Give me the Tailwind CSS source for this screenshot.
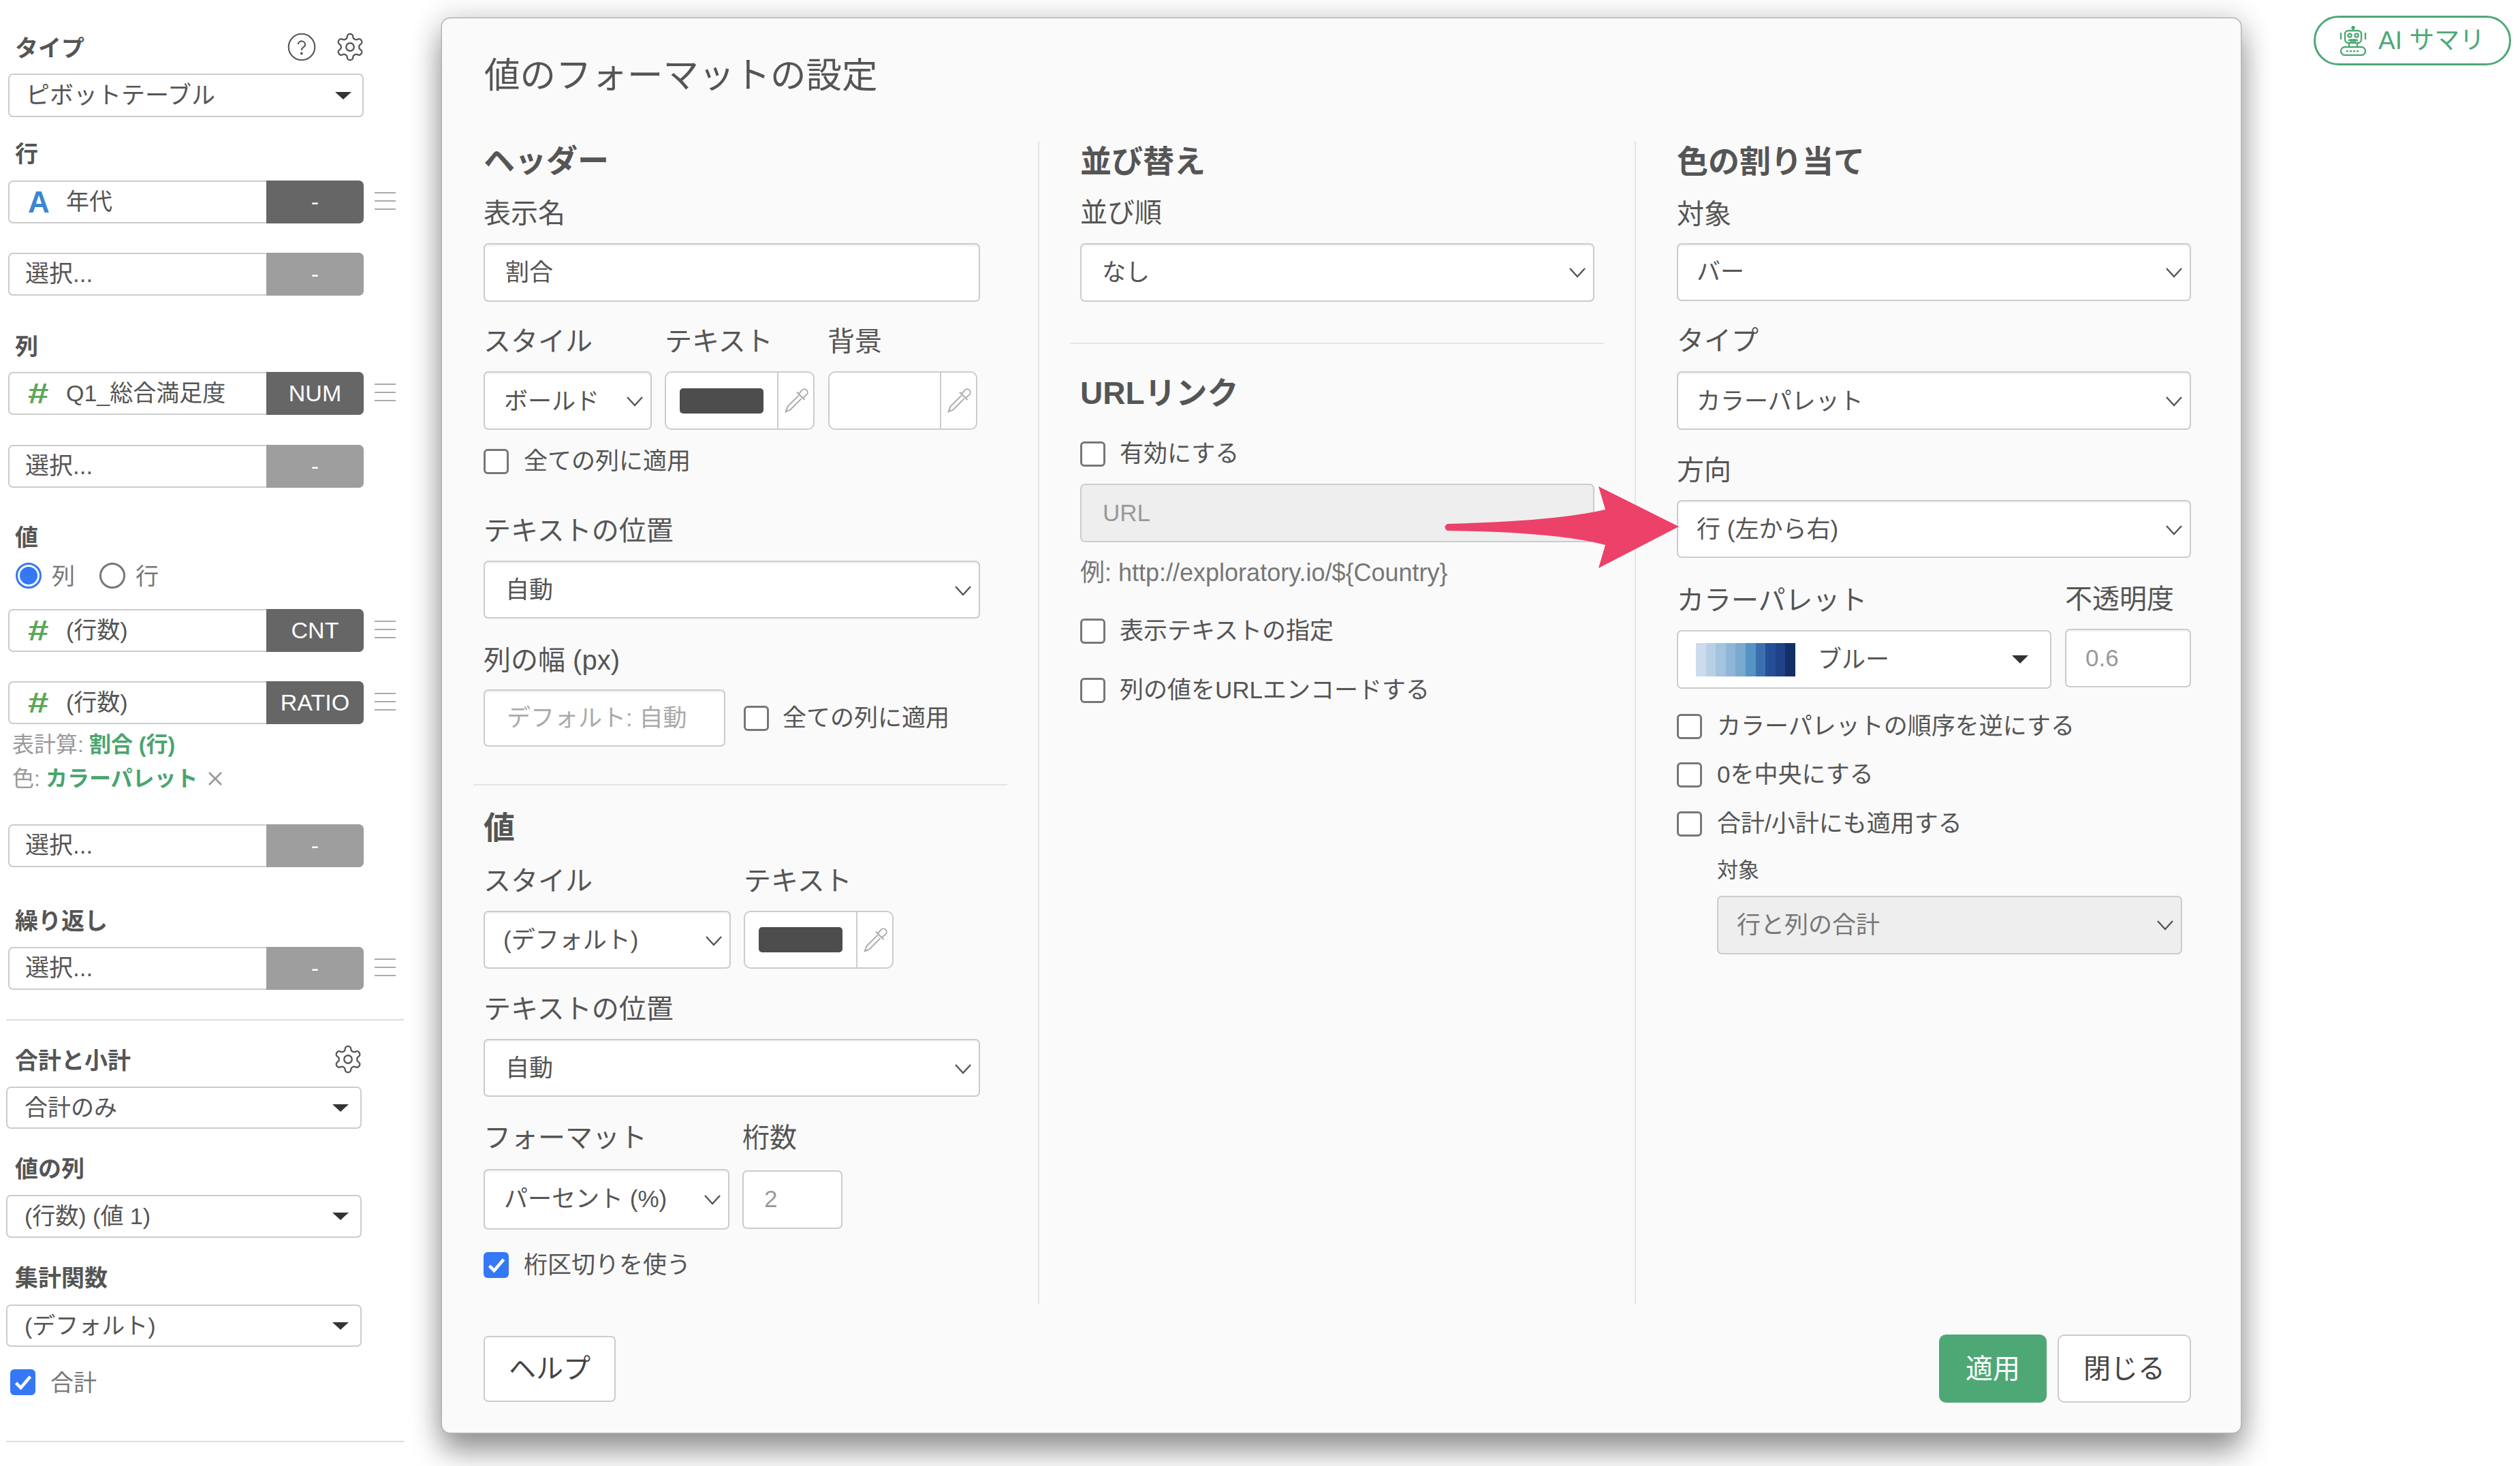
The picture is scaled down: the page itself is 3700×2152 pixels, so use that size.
<!DOCTYPE html>
<html lang="ja">
<head>
    <meta charset="UTF-8">
    <meta name="viewport" content="width=device-width, initial-scale=1.0">
    <title>値のフォーマットの設定</title>
    <script src="https://cdn.jsdelivr.net/npm/@tailwindcss/browser@4"></script>
</head>
<body class="bg-white text-[#555] font-['Liberation_Sans','Noto_Sans_CJK_JP',sans-serif]">
<div class="relative w-[3700px] h-[2152px] overflow-hidden">

    <!-- Sidebar -->
    <aside class="w-[600px] pl-[12px] pt-[49px]">
        <div class="flex items-center justify-between w-[525px] h-[40px] pl-[10px]">
            <span class="pt-[4px] text-[34px] font-bold">タイプ</span>
            <div class="flex items-center gap-[27px]">
                <svg class="w-[42px] h-[42px]" viewBox="0 0 24 24" fill="none" stroke="#555" stroke-width="1.2"><circle cx="12" cy="12" r="11"/><path d="M9 9.3a3 3 0 0 1 5.9.8c0 2-3 2.3-3 4.2" stroke-linecap="round"/><circle cx="11.9" cy="17.4" r=".5" fill="#555"/></svg>
                <svg class="w-[46px] h-[46px]" viewBox="0 0 24 24" fill="none" stroke="#555" stroke-width="1.2"><path d="M12.22 2h-.44a2 2 0 0 0-2 2v.18a2 2 0 0 1-1 1.73l-.43.25a2 2 0 0 1-2 0l-.15-.08a2 2 0 0 0-2.73.73l-.22.38a2 2 0 0 0 .73 2.73l.15.1a2 2 0 0 1 1 1.72v.51a2 2 0 0 1-1 1.74l-.15.09a2 2 0 0 0-.73 2.73l.22.38a2 2 0 0 0 2.73.73l.15-.08a2 2 0 0 1 2 0l.43.25a2 2 0 0 1 1 1.73V20a2 2 0 0 0 2 2h.44a2 2 0 0 0 2-2v-.18a2 2 0 0 1 1-1.73l.43-.25a2 2 0 0 1 2 0l.15.08a2 2 0 0 0 2.73-.73l.22-.39a2 2 0 0 0-.73-2.73l-.15-.08a2 2 0 0 1-1-1.74v-.5a2 2 0 0 1 1-1.74l.15-.09a2 2 0 0 0 .73-2.73l-.22-.38a2 2 0 0 0-2.73-.73l-.15.08a2 2 0 0 1-2 0l-.43-.25a2 2 0 0 1-1-1.73V4a2 2 0 0 0-2-2z"/><circle cx="12" cy="12" r="3"/></svg>
            </div>
        </div>
        <div class="mt-[19px] flex items-center justify-between w-[522px] h-[64px] pl-[24px] pr-[16px] bg-white border-2 border-[#ccc] rounded-[7px] text-[35px]">
            <span>ピボットテーブル</span><span class="w-0 h-0 border-x-[12px] border-x-transparent border-t-[11px] border-t-[#333]"></span>
        </div>

        <div class="mt-[32px] h-[40px] pl-[10px] pt-[4px] flex items-center text-[34px] font-bold">行</div>
        <div class="mt-[21px] flex items-center h-[63px]">
            <div class="flex items-center w-[379px] h-full pl-[27px] bg-white border-2 border-r-0 border-[#ccc] rounded-l-[7px] text-[34px]">
                <span class="w-[56px] text-[44px] font-bold text-[#3b86d1]">A</span><span>年代</span>
            </div>
            <div class="flex items-center justify-center w-[143px] h-full bg-[#666] rounded-r-[7px] text-white text-[34px]">-</div>
            <div class="ml-[16px] -mt-[4px] w-[31px] flex flex-col gap-[10px]"><div class="h-[2px] bg-[#aaa]"></div><div class="h-[2px] bg-[#aaa]"></div><div class="h-[2px] bg-[#aaa]"></div></div>
        </div>
        <div class="mt-[43px] flex items-center h-[63px]">
            <div class="flex items-center w-[379px] h-full pl-[23px] bg-white border-2 border-r-0 border-[#ccc] rounded-l-[7px] text-[35px]">選択...</div>
            <div class="flex items-center justify-center w-[143px] h-full bg-[#9e9e9e] rounded-r-[7px] text-white text-[34px]">-</div>
        </div>

        <div class="mt-[53px] h-[40px] pl-[10px] pt-[4px] flex items-center text-[34px] font-bold">列</div>
        <div class="mt-[19px] flex items-center h-[63px]">
            <div class="flex items-center w-[379px] h-full pl-[27px] bg-white border-2 border-r-0 border-[#ccc] rounded-l-[7px] text-[34px]">
                <span class="w-[56px] text-[42px] font-bold text-[#5aa758]"><span class="inline-block origin-left scale-x-[1.3]">#</span></span><span>Q1_総合満足度</span>
            </div>
            <div class="flex items-center justify-center w-[143px] h-full bg-[#666] rounded-r-[7px] text-white text-[34px]">NUM</div>
            <div class="ml-[16px] -mt-[4px] w-[31px] flex flex-col gap-[10px]"><div class="h-[2px] bg-[#aaa]"></div><div class="h-[2px] bg-[#aaa]"></div><div class="h-[2px] bg-[#aaa]"></div></div>
        </div>
        <div class="mt-[44px] flex items-center h-[63px]">
            <div class="flex items-center w-[379px] h-full pl-[23px] bg-white border-2 border-r-0 border-[#ccc] rounded-l-[7px] text-[35px]">選択...</div>
            <div class="flex items-center justify-center w-[143px] h-full bg-[#9e9e9e] rounded-r-[7px] text-white text-[34px]">-</div>
        </div>

        <div class="mt-[51px] h-[40px] pl-[10px] pt-[4px] flex items-center text-[34px] font-bold">値</div>
        <div class="mt-[18px] flex items-center h-[38px] pl-[11px] pt-[1px] text-[34px] text-[#777]">
            <span class="flex items-center justify-center w-[38px] h-[38px] rounded-full border-[3px] border-[#3478f6] bg-white"><span class="w-[26px] h-[26px] rounded-full bg-[#3478f6]"></span></span>
            <span class="ml-[15px] pt-[3px]">列</span>
            <span class="ml-[36px] w-[38px] h-[38px] rounded-full border-[3px] border-[#777] bg-white"></span>
            <span class="ml-[15px] pt-[3px]">行</span>
        </div>
        <div class="mt-[31px] flex items-center h-[63px]">
            <div class="flex items-center w-[379px] h-full pl-[27px] bg-white border-2 border-r-0 border-[#ccc] rounded-l-[7px] text-[34px]">
                <span class="w-[56px] text-[42px] font-bold text-[#5aa758]"><span class="inline-block origin-left scale-x-[1.3]">#</span></span><span>(行数)</span>
            </div>
            <div class="flex items-center justify-center w-[143px] h-full bg-[#666] rounded-r-[7px] text-white text-[34px]">CNT</div>
            <div class="ml-[16px] -mt-[4px] w-[31px] flex flex-col gap-[10px]"><div class="h-[2px] bg-[#aaa]"></div><div class="h-[2px] bg-[#aaa]"></div><div class="h-[2px] bg-[#aaa]"></div></div>
        </div>
        <div class="mt-[43px] flex items-center h-[63px]">
            <div class="flex items-center w-[379px] h-full pl-[27px] bg-white border-2 border-r-0 border-[#ccc] rounded-l-[7px] text-[34px]">
                <span class="w-[56px] text-[42px] font-bold text-[#5aa758]"><span class="inline-block origin-left scale-x-[1.3]">#</span></span><span>(行数)</span>
            </div>
            <div class="flex items-center justify-center w-[143px] h-full bg-[#666] rounded-r-[7px] text-white text-[34px]">RATIO</div>
            <div class="ml-[16px] -mt-[4px] w-[31px] flex flex-col gap-[10px]"><div class="h-[2px] bg-[#aaa]"></div><div class="h-[2px] bg-[#aaa]"></div><div class="h-[2px] bg-[#aaa]"></div></div>
        </div>
        <div class="mt-[10px] h-[40px] pl-[6px] flex items-center text-[32px] text-[#999]">表計算:<span class="ml-[8px] font-bold text-[#4aa56f]">割合 (行)</span></div>
        <div class="mt-[10px] h-[40px] pl-[6px] flex items-center text-[32px] text-[#999]">色:<span class="ml-[8px] font-bold text-[#4aa56f]">カラーパレット</span>
            <svg class="ml-[14px] w-[22px] h-[22px]" viewBox="0 0 22 22" fill="none" stroke="#999" stroke-width="2.6"><path d="M2 2l18 18M20 2L2 20"/></svg>
        </div>
        <div class="mt-[47px] flex items-center h-[63px]">
            <div class="flex items-center w-[379px] h-full pl-[23px] bg-white border-2 border-r-0 border-[#ccc] rounded-l-[7px] text-[35px]">選択...</div>
            <div class="flex items-center justify-center w-[143px] h-full bg-[#9e9e9e] rounded-r-[7px] text-white text-[34px]">-</div>
        </div>

        <div class="mt-[57px] h-[40px] pl-[10px] pt-[4px] flex items-center text-[34px] font-bold">繰り返し</div>
        <div class="mt-[20px] flex items-center h-[63px]">
            <div class="flex items-center w-[379px] h-full pl-[23px] bg-white border-2 border-r-0 border-[#ccc] rounded-l-[7px] text-[35px]">選択...</div>
            <div class="flex items-center justify-center w-[143px] h-full bg-[#9e9e9e] rounded-r-[7px] text-white text-[34px]">-</div>
            <div class="ml-[16px] -mt-[4px] w-[31px] flex flex-col gap-[10px]"><div class="h-[2px] bg-[#aaa]"></div><div class="h-[2px] bg-[#aaa]"></div><div class="h-[2px] bg-[#aaa]"></div></div>
        </div>

        <div class="mt-[43px] -ml-[3px] w-[584px] h-[2px] bg-[#ddd]"></div>

        <div class="mt-[37px] flex items-center justify-between w-[522px] h-[40px] pl-[10px]">
            <span class="pt-[4px] text-[34px] font-bold">合計と小計</span>
            <svg class="w-[46px] h-[46px]" viewBox="0 0 24 24" fill="none" stroke="#555" stroke-width="1.2"><path d="M12.22 2h-.44a2 2 0 0 0-2 2v.18a2 2 0 0 1-1 1.73l-.43.25a2 2 0 0 1-2 0l-.15-.08a2 2 0 0 0-2.73.73l-.22.38a2 2 0 0 0 .73 2.73l.15.1a2 2 0 0 1 1 1.72v.51a2 2 0 0 1-1 1.74l-.15.09a2 2 0 0 0-.73 2.73l.22.38a2 2 0 0 0 2.73.73l.15-.08a2 2 0 0 1 2 0l.43.25a2 2 0 0 1 1 1.73V20a2 2 0 0 0 2 2h.44a2 2 0 0 0 2-2v-.18a2 2 0 0 1 1-1.73l.43-.25a2 2 0 0 1 2 0l.15.08a2 2 0 0 0 2.73-.73l.22-.39a2 2 0 0 0-.73-2.73l-.15-.08a2 2 0 0 1-1-1.74v-.5a2 2 0 0 1 1-1.74l.15-.09a2 2 0 0 0 .73-2.73l-.22-.38a2 2 0 0 0-2.73-.73l-.15.08a2 2 0 0 1-2 0l-.43-.25a2 2 0 0 1-1-1.73V4a2 2 0 0 0-2-2z"/><circle cx="12" cy="12" r="3"/></svg>
        </div>
        <div class="mt-[20px] -ml-[3px] flex items-center justify-between w-[522px] h-[62px] pl-[25px] pr-[17px] bg-white border-2 border-[#ccc] rounded-[7px] text-[34px]">
            <span>合計のみ</span><span class="w-0 h-0 border-x-[12px] border-x-transparent border-t-[11px] border-t-[#333]"></span>
        </div>
        <div class="mt-[37px] h-[40px] pl-[10px] pt-[4px] flex items-center text-[34px] font-bold">値の列</div>
        <div class="mt-[20px] -ml-[3px] flex items-center justify-between w-[522px] h-[63px] pl-[25px] pr-[17px] bg-white border-2 border-[#ccc] rounded-[7px] text-[34px]">
            <span>(行数) (値 1)</span><span class="w-0 h-0 border-x-[12px] border-x-transparent border-t-[11px] border-t-[#333]"></span>
        </div>
        <div class="mt-[37px] h-[40px] pl-[10px] pt-[4px] flex items-center text-[34px] font-bold">集計関数</div>
        <div class="mt-[21px] -ml-[3px] flex items-center justify-between w-[522px] h-[62px] pl-[25px] pr-[17px] bg-white border-2 border-[#ccc] rounded-[7px] text-[34px]">
            <span>(デフォルト)</span><span class="w-0 h-0 border-x-[12px] border-x-transparent border-t-[11px] border-t-[#333]"></span>
        </div>
        <div class="mt-[33px] flex items-center h-[38px] pl-[3px] text-[34px] text-[#777]">
            <span class="flex items-center justify-center w-[37px] h-[38px] rounded-[6px] bg-[#3478f6]"><svg class="w-[28px] h-[28px]" viewBox="0 0 24 24" fill="none" stroke="#fff" stroke-width="4"><path d="M3 13l6 6L21 5"/></svg></span>
            <span class="ml-[22px] pt-[3px]">合計</span>
        </div>
        <div class="mt-[67px] -ml-[3px] w-[584px] h-[2px] bg-[#ddd]"></div>
    </aside>

    <!-- AI summary pill -->
    <div class="absolute left-[3397px] top-[23px] flex items-center w-[290px] h-[73px] pl-[35px] border-[3px] border-[#4ea875] rounded-full text-[#4ea875] text-[37px]">
        <svg class="w-[40px] h-[44px]" viewBox="0 0 40 44" fill="none" stroke="#4ea875" stroke-width="2.4">
            <path d="M20 1v6"/><circle cx="20" cy="2.5" r="1.5" fill="#4ea875"/>
            <rect x="8" y="7" width="24" height="18" rx="5"/>
            <circle cx="15" cy="14" r="2.6"/><circle cx="25" cy="14" r="2.6"/>
            <path d="M13 21h14M17 19v5M20 19v5M23 19v5M14 25v6M26 25v6M2 10v10M38 10v10"/>
            <rect x="2" y="31" width="36" height="12" rx="6"/>
            <path d="M10 37h20" stroke-dasharray="3 2"/>
        </svg>
        <span class="ml-[17px]">AI サマリ</span>
    </div>

    <!-- Modal -->
    <div class="absolute left-[649px] top-[27px] w-[2641px] h-[2076px] pt-[52px] bg-[#fafafa] rounded-[12px] shadow-[0_0_0_1.5px_#b5b5b5,0_28px_44px_0_rgba(0,0,0,0.38),0_0_40px_6px_rgba(0,0,0,0.14)]">
        <h2 class="h-[60px] pl-[62px] pt-[4px] flex items-center text-[52.5px] font-normal text-[#555]">値のフォーマットの設定</h2>

        <div class="mt-[68px] flex h-[1708px]">
            <!-- Column 1 -->
            <div class="w-[877px] pl-[61px] border-r-2 border-[#e5e5e5]">
                <div class="w-[729px]">
                    <h3 class="h-[54px] pt-[4px] flex items-center text-[46px] font-bold">ヘッダー</h3>
                    <label class="mt-[27px] h-[48px] pt-[2px] flex items-center text-[40px]">表示名</label>
                    <div class="mt-[21px] flex items-center h-[86px] pl-[30px] bg-white border-2 border-[#ccc] rounded-[7px] shadow-[inset_0_2px_2px_rgba(0,0,0,0.06)] text-[35px]">割合</div>

                    <div class="mt-[34px] flex h-[48px] items-center text-[40px]">
                        <span class="w-[266px]">スタイル</span><span class="w-[239px]">テキスト</span><span>背景</span>
                    </div>
                    <div class="mt-[20px] flex h-[86px]">
                        <div class="flex items-center justify-between w-[247px] pl-[28px] pr-[10px] pt-[2px] bg-white border-2 border-[#ccc] rounded-[7px] shadow-[inset_0_2px_2px_rgba(0,0,0,0.06)] text-[35px]">
                            <span>ボールド</span>
                            <svg class="w-[26px] h-[16px]" viewBox="0 0 26 16" fill="none" stroke="#555" stroke-width="2.4"><path d="M2 2l11 12L24 2"/></svg>
                        </div>
                        <div class="ml-[19px] flex w-[220px] bg-white border-2 border-[#ccc] rounded-[10px]">
                            <div class="flex-1 flex items-center justify-center border-r-2 border-[#ccc]"><div class="w-[123px] h-[37px] rounded-[5px] bg-[#4d4d4d]"></div></div>
                            <div class="w-[51px] flex items-center justify-center"><svg class="w-[46px] h-[46px] shrink-0" viewBox="0 0 24 24" fill="none" stroke="#aaa" stroke-width="1"><path d="M14 7l2.5-3a2.1 2.1 0 0 1 3.5 3.5L17 10"/><path d="M12.5 5.5l6 6"/><path d="M14 8L5.5 16.5 4 20.5 7.5 19 16 10.5"/></svg></div>
                        </div>
                        <div class="ml-[20px] flex w-[219px] bg-white border-2 border-[#ccc] rounded-[10px]">
                            <div class="flex-1 border-r-2 border-[#ccc]"></div>
                            <div class="w-[51px] flex items-center justify-center"><svg class="w-[46px] h-[46px] shrink-0" viewBox="0 0 24 24" fill="none" stroke="#aaa" stroke-width="1"><path d="M14 7l2.5-3a2.1 2.1 0 0 1 3.5 3.5L17 10"/><path d="M12.5 5.5l6 6"/><path d="M14 8L5.5 16.5 4 20.5 7.5 19 16 10.5"/></svg></div>
                        </div>
                    </div>
                    <div class="mt-[27px] flex items-center h-[38px] text-[35px]">
                        <span class="w-[37px] h-[37px] rounded-[6px] border-[3px] border-[#777] bg-white"></span><span class="ml-[22px]">全ての列に適用</span>
                    </div>

                    <label class="mt-[58px] h-[48px] pt-[2px] flex items-center text-[40px]">テキストの位置</label>
                    <div class="mt-[21px] flex items-center justify-between h-[85px] pl-[30px] pr-[10px] pt-[2px] bg-white border-2 border-[#ccc] rounded-[7px] shadow-[inset_0_2px_2px_rgba(0,0,0,0.06)] text-[35px]">
                        <span>自動</span>
                        <svg class="w-[26px] h-[16px]" viewBox="0 0 26 16" fill="none" stroke="#555" stroke-width="2.4"><path d="M2 2l11 12L24 2"/></svg>
                    </div>

                    <label class="mt-[37px] h-[48px] flex items-center text-[40px]">列の幅 (px)</label>
                    <div class="mt-[19px] flex items-center h-[84px]">
                        <div class="flex items-center w-[355px] h-full pl-[32px] bg-white border-2 border-[#ccc] rounded-[7px] shadow-[inset_0_2px_2px_rgba(0,0,0,0.06)] text-[35px] text-[#aaa]">デフォルト: 自動</div>
                        <span class="ml-[27px] w-[37px] h-[37px] rounded-[6px] border-[3px] border-[#777] bg-white"></span>
                        <span class="ml-[20px] text-[35px]">全ての列に適用</span>
                    </div>

                    <div class="mt-[55px] -ml-[15px] w-[784px] h-[2px] bg-[#e5e5e5]"></div>

                    <h3 class="mt-[34px] h-[54px] pt-[2px] flex items-center text-[46px] font-bold">値</h3>
                    <div class="mt-[27px] flex h-[48px] pt-[2px] items-center text-[40px]">
                        <span class="w-[382px]">スタイル</span><span>テキスト</span>
                    </div>
                    <div class="mt-[21px] flex h-[85px]">
                        <div class="flex items-center justify-between w-[363px] pl-[27px] pr-[10px] pt-[2px] bg-white border-2 border-[#ccc] rounded-[7px] shadow-[inset_0_2px_2px_rgba(0,0,0,0.06)] text-[35px]">
                            <span>(デフォルト)</span>
                            <svg class="w-[26px] h-[16px]" viewBox="0 0 26 16" fill="none" stroke="#555" stroke-width="2.4"><path d="M2 2l11 12L24 2"/></svg>
                        </div>
                        <div class="ml-[19px] flex w-[220px] bg-white border-2 border-[#ccc] rounded-[10px]">
                            <div class="flex-1 flex items-center justify-center border-r-2 border-[#ccc]"><div class="w-[123px] h-[37px] rounded-[5px] bg-[#4d4d4d]"></div></div>
                            <div class="w-[51px] flex items-center justify-center"><svg class="w-[46px] h-[46px] shrink-0" viewBox="0 0 24 24" fill="none" stroke="#aaa" stroke-width="1"><path d="M14 7l2.5-3a2.1 2.1 0 0 1 3.5 3.5L17 10"/><path d="M12.5 5.5l6 6"/><path d="M14 8L5.5 16.5 4 20.5 7.5 19 16 10.5"/></svg></div>
                        </div>
                    </div>

                    <label class="mt-[34px] h-[48px] pt-[2px] flex items-center text-[40px]">テキストの位置</label>
                    <div class="mt-[21px] flex items-center justify-between h-[85px] pl-[30px] pr-[10px] pt-[2px] bg-white border-2 border-[#ccc] rounded-[7px] shadow-[inset_0_2px_2px_rgba(0,0,0,0.06)] text-[35px]">
                        <span>自動</span>
                        <svg class="w-[26px] h-[16px]" viewBox="0 0 26 16" fill="none" stroke="#555" stroke-width="2.4"><path d="M2 2l11 12L24 2"/></svg>
                    </div>

                    <div class="mt-[35px] flex h-[48px] pt-[1px] items-center text-[40px]">
                        <span class="w-[380px]">フォーマット</span><span>桁数</span>
                    </div>
                    <div class="mt-[23px] flex items-center h-[89px]">
                        <div class="flex items-center justify-between w-[361px] h-full pl-[28px] pr-[10px] bg-white border-2 border-[#ccc] rounded-[7px] shadow-[inset_0_2px_2px_rgba(0,0,0,0.06)] text-[35px]">
                            <span>パーセント (%)</span>
                            <svg class="w-[26px] h-[16px]" viewBox="0 0 26 16" fill="none" stroke="#555" stroke-width="2.4"><path d="M2 2l11 12L24 2"/></svg>
                        </div>
                        <div class="ml-[19px] flex items-center w-[147px] h-[86px] pl-[30px] bg-white border-2 border-[#ccc] rounded-[7px] text-[35px] text-[#999]">2</div>
                    </div>
                    <div class="mt-[33px] flex items-center h-[38px] text-[35px]">
                        <span class="flex items-center justify-center w-[37px] h-[38px] rounded-[6px] bg-[#3478f6]"><svg class="w-[28px] h-[28px]" viewBox="0 0 24 24" fill="none" stroke="#fff" stroke-width="4"><path d="M3 13l6 6L21 5"/></svg></span>
                        <span class="ml-[22px]">桁区切りを使う</span>
                    </div>
                </div>
            </div>

            <!-- Column 2 -->
            <div class="w-[876px] pl-[60px] border-r-2 border-[#e5e5e5]">
                <div class="w-[755px]">
                    <h3 class="mt-[2px] h-[54px] pt-[3px] flex items-center text-[46px] font-bold">並び替え</h3>
                    <label class="mt-[25px] h-[48px] flex items-center text-[40px]">並び順</label>
                    <div class="mt-[21px] flex items-center justify-between h-[86px] pl-[30px] pr-[10px] bg-white border-2 border-[#ccc] rounded-[7px] shadow-[inset_0_2px_2px_rgba(0,0,0,0.06)] text-[35px]">
                        <span>なし</span>
                        <svg class="w-[26px] h-[16px]" viewBox="0 0 26 16" fill="none" stroke="#555" stroke-width="2.4"><path d="M2 2l11 12L24 2"/></svg>
                    </div>
                    <div class="mt-[60px] -ml-[15px] w-[784px] h-[2px] bg-[#e5e5e5]"></div>
                    <h3 class="mt-[44px] h-[54px] pt-[2px] flex items-center text-[46px] font-bold">URLリンク</h3>
                    <div class="mt-[45px] flex items-center h-[37px] text-[35px]">
                        <span class="w-[37px] h-[37px] rounded-[6px] border-[3px] border-[#777] bg-white"></span><span class="ml-[21px]">有効にする</span>
                    </div>
                    <div class="mt-[25px] flex items-center h-[86px] pl-[31px] bg-[#eee] border-2 border-[#ccc] rounded-[7px] text-[35px] text-[#999]">URL</div>
                    <div class="mt-[25px] h-[40px] flex items-center text-[36px] text-[#777]">例: http://exploratory.io/${Country}</div>
                    <div class="mt-[47px] flex items-center h-[37px] text-[35px]">
                        <span class="w-[37px] h-[37px] rounded-[6px] border-[3px] border-[#777] bg-white"></span><span class="ml-[21px]">表示テキストの指定</span>
                    </div>
                    <div class="mt-[50px] flex items-center h-[37px] text-[35px]">
                        <span class="w-[37px] h-[37px] rounded-[6px] border-[3px] border-[#777] bg-white"></span><span class="ml-[21px]">列の値をURLエンコードする</span>
                    </div>
                </div>
            </div>

            <!-- Column 3 -->
            <div class="pl-[60px]">
                <div class="w-[755px]">
                    <h3 class="mt-[2px] h-[54px] pt-[3px] flex items-center text-[46px] font-bold">色の割り当て</h3>
                    <label class="mt-[26px] h-[48px] pt-[2px] flex items-center text-[40px]">対象</label>
                    <div class="mt-[20px] flex items-center justify-between h-[85px] pl-[27px] pr-[10px] bg-white border-2 border-[#ccc] rounded-[7px] shadow-[inset_0_2px_2px_rgba(0,0,0,0.06)] text-[35px]">
                        <span>バー</span>
                        <svg class="w-[26px] h-[16px]" viewBox="0 0 26 16" fill="none" stroke="#555" stroke-width="2.4"><path d="M2 2l11 12L24 2"/></svg>
                    </div>
                    <label class="mt-[33px] h-[48px] pt-[2px] flex items-center text-[40px]">タイプ</label>
                    <div class="mt-[22px] flex items-center justify-between h-[86px] pl-[27px] pr-[10px] pt-[2px] bg-white border-2 border-[#ccc] rounded-[7px] shadow-[inset_0_2px_2px_rgba(0,0,0,0.06)] text-[35px]">
                        <span>カラーパレット</span>
                        <svg class="w-[26px] h-[16px]" viewBox="0 0 26 16" fill="none" stroke="#555" stroke-width="2.4"><path d="M2 2l11 12L24 2"/></svg>
                    </div>
                    <label class="mt-[35px] h-[48px] flex items-center text-[40px]">方向</label>
                    <div class="mt-[20px] flex items-center justify-between h-[85px] pl-[27px] pr-[10px] pt-[2px] bg-white border-2 border-[#ccc] rounded-[7px] shadow-[inset_0_2px_2px_rgba(0,0,0,0.06)] text-[35px]">
                        <span>行 (左から右)</span>
                        <svg class="w-[26px] h-[16px]" viewBox="0 0 26 16" fill="none" stroke="#555" stroke-width="2.4"><path d="M2 2l11 12L24 2"/></svg>
                    </div>
                    <div class="mt-[37px] flex h-[48px] pt-[2px] items-center text-[40px]">
                        <span class="w-[570px]">カラーパレット</span><span class="-mt-[5px]">不透明度</span>
                    </div>
                    <div class="mt-[21px] flex h-[86px]">
                        <div class="flex items-center w-[550px] h-full pl-[26px] pr-[32px] bg-white border-2 border-[#ccc] rounded-[7px] text-[35px]">
                            <div class="flex w-[146px] h-[49px]">
                                <div class="flex-1 bg-[#cddcec]"></div><div class="flex-1 bg-[#b8d0e6]"></div><div class="flex-1 bg-[#a3c3de]"></div><div class="flex-1 bg-[#8fb6d8]"></div><div class="flex-1 bg-[#7aa9d0]"></div><div class="flex-1 bg-[#5593c3]"></div><div class="flex-1 bg-[#3a70ae]"></div><div class="flex-1 bg-[#254f97]"></div><div class="flex-1 bg-[#1f4289]"></div><div class="flex-1 bg-[#142f66]"></div>
                            </div>
                            <span class="ml-[33px] flex-1">ブルー</span>
                            <span class="w-0 h-0 border-x-[12px] border-x-transparent border-t-[12px] border-t-[#333]"></span>
                        </div>
                        <div class="ml-[20px] -mt-[2px] flex items-center w-[185px] h-full pl-[28px] bg-white border-2 border-[#ccc] rounded-[7px] shadow-[inset_0_2px_2px_rgba(0,0,0,0.06)] text-[35px] text-[#999]">0.6</div>
                    </div>
                    <div class="mt-[37px] flex items-center h-[37px] text-[35px]">
                        <span class="w-[37px] h-[37px] rounded-[6px] border-[3px] border-[#777] bg-white"></span><span class="ml-[22px]">カラーパレットの順序を逆にする</span>
                    </div>
                    <div class="mt-[34px] flex items-center h-[37px] text-[35px]">
                        <span class="w-[37px] h-[37px] rounded-[6px] border-[3px] border-[#777] bg-white"></span><span class="ml-[22px]">0を中央にする</span>
                    </div>
                    <div class="mt-[35px] flex items-center h-[37px] text-[35px]">
                        <span class="w-[37px] h-[37px] rounded-[6px] border-[3px] border-[#777] bg-white"></span><span class="ml-[22px]">合計/小計にも適用する</span>
                    </div>
                    <div class="mt-[30px] ml-[59px] h-[40px] flex items-center text-[31px]">対象</div>
                    <div class="mt-[17px] ml-[59px] flex items-center justify-between w-[683px] h-[86px] pl-[27px] pr-[10px] bg-[#eee] border-2 border-[#ccc] rounded-[7px] text-[35px] text-[#777]">
                        <span>行と列の合計</span>
                        <svg class="w-[26px] h-[16px]" viewBox="0 0 26 16" fill="none" stroke="#555" stroke-width="2.4"><path d="M2 2l11 12L24 2"/></svg>
                    </div>
                </div>
            </div>
        </div>

        <!-- Footer -->
        <div class="mt-[44px] flex items-center justify-between pl-[61px] pr-[73px] h-[100px]">
            <button class="w-[194px] h-[97px] bg-white border-2 border-[#ccc] rounded-[7px] text-[40px] text-[#444]">ヘルプ</button>
            <div class="flex gap-[16px] h-[100px]">
                <button class="w-[158px] bg-[#4ea875] rounded-[10px] text-[40px] text-white">適用</button>
                <button class="w-[196px] bg-white border-2 border-[#ccc] rounded-[10px] text-[40px] text-[#444]">閉じる</button>
            </div>
        </div>
    </div>

    <!-- Annotation arrow -->
    <svg class="absolute left-[2115px] top-[710px] w-[355px] h-[130px]" viewBox="2115 710 355 130" fill="#ec4169">
        <path d="M2125 769 Q2285 765 2357 748 L2347 714 L2465 773 L2347 834 L2357 800 Q2285 781 2125 779 Q2118 774 2125 769Z"/>
    </svg>
</div>
</body>
</html>
